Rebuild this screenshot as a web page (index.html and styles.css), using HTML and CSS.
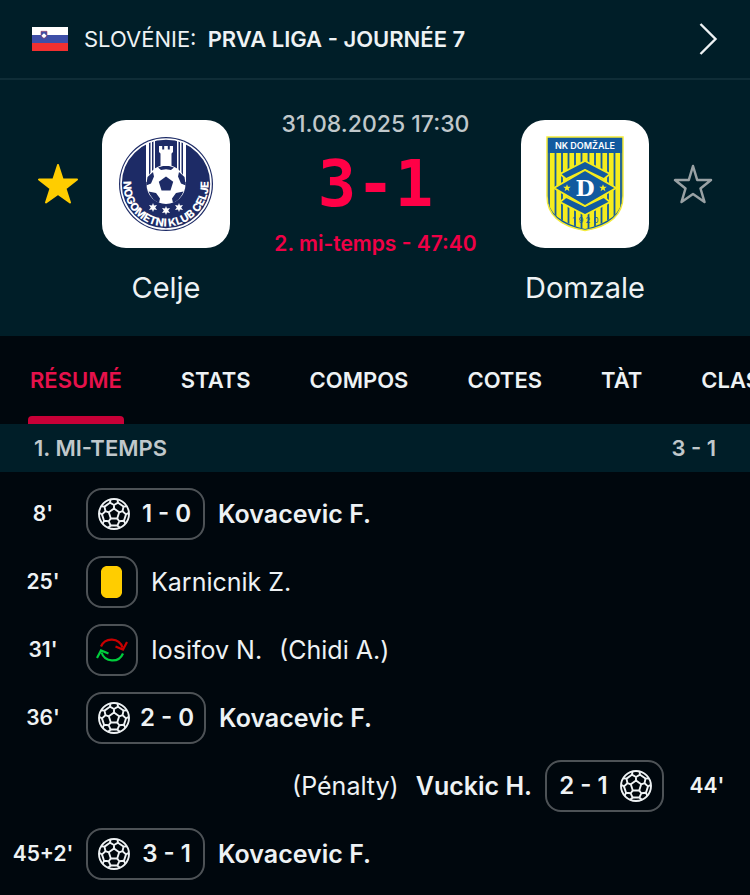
FILE: index.html
```html
<!DOCTYPE html>
<html lang="fr">
<head>
    <meta charset="UTF-8">
    <meta name="viewport" content="width=device-width, initial-scale=1">
    <title>Celje - Domzale</title>
    <link rel="stylesheet" href="styles.css">
</head>
<body>
    <!-- shared icons -->
    <svg class="sprite" aria-hidden="true">
        <symbol id="ball" viewBox="0 0 32 32">
            <g fill="none" stroke="currentColor" stroke-width="1.900" stroke-linejoin="round">
                <circle cx="16" cy="16" r="15"/>
                <path d="M16 10.500l5.200 3.800-2 6.200h-6.400l-2-6.200z"/>
                <path id="seam" d="M16 10.500V7M12.600 1.400l-.7 3.300L16 7l4.100-2.300-.7-3.300M20.100 4.700l5.400 3.900"/>
                <use href="#seam" transform="rotate(72 16 16)"/>
                <use href="#seam" transform="rotate(144 16 16)"/>
                <use href="#seam" transform="rotate(216 16 16)"/>
                <use href="#seam" transform="rotate(288 16 16)"/>
            </g>
        </symbol>
    </svg>

    <header class="league">
        <svg class="flag" viewBox="0 0 36 24" aria-hidden="true">
            <path fill="#fff" d="M0 0h36v8H0z"/>
            <path fill="#3d4fa8" d="M0 8h36v8H0z"/>
            <path fill="#f03030" d="M0 16h36v8H0z"/>
            <path fill="#3d4fa8" stroke="#b0405c" stroke-width=".6" d="M9 4.300h6V8q0 2.500-3 3.500Q9 10.500 9 8z"/>
            <path fill="#fff" d="M9.500 8.500l1.200-1 1.300-1.300 1.300 1.300 1.200 1q-.8 1.800-2.500 2.400-1.700-.6-2.500-2.400z"/>
        </svg>
        <a class="league-name" href="#">SLOVÉNIE: <b>PRVA LIGA - JOURNÉE 7</b></a>
        <svg class="chevron" viewBox="0 0 20 32" aria-hidden="true">
            <path fill="none" stroke="#eef2f4" stroke-width="2.400" d="M2.500 1l15 15-15 15"/>
        </svg>
    </header>

    <section class="match">
        <button class="star star-on" aria-label="Suivre Celje">
            <svg viewBox="0 0 40 40"><path d="M20 1l4.700 14.500H39L27.500 24.500 32 38.500 20 30 8 38.500l4.500-14L1 15.500h14.300z"/></svg>
        </button>
        <div class="crest">
            <svg viewBox="0 0 128 128" aria-hidden="true">
                <circle cx="64" cy="64" r="47" fill="#1d2b66"/>
                <circle cx="64" cy="64" r="45" fill="none" stroke="#fff" stroke-width="1.600"/>
                <path fill="#fff" d="M44 23.500l3-1.200V62h-3zM48.500 21.500l1.500-.5V60h-1.500zM51.500 21l1.500-.5V56h-1.500zM84 23.500l-3-1.200V62h3zM79.500 21.500L78 21v39h1.500zM76.500 21l-1.500-.5V56h1.500z"/>
                <path fill="#fff" d="M57 26h3.200v3.500h2V26h3.600v3.500h2V26H71v6l-1.500 1.500V48h-11V33.500L57 32z"/>
                <circle cx="64" cy="64.500" r="19.500" fill="#fff"/>
                <g fill="#1d2b66">
                    <path d="M64 56.500l7.200 5.200L68.500 70.500h-9l-2.700-8.800z"/>
                    <path d="M56 47.500l5-1.500h6l5 1.500-3 2.500-5-.8-5 .8zM45.500 57l5.500-5 1 4.500-3 7-4.800 2zM82.500 57L77 52l-1 4.500 3 7 4.800 2zM46.500 71.500l7.500 1.500 4 5.500-1 4.500q-7-3-10.500-11.500zM81.500 71.500L74 73l-4 5.500 1 4.500q7-3 10.500-11.500z"/>
                </g>
                <g fill="#fff">
                    <path id="mini-star" d="M64 86l1 2.500 3-.4-1.800 2.400 1.800 2.400-3-.4L64 95l-1-2.500-3 .4 1.800-2.400-1.800-2.400 3 .4z"/>
                    <use href="#mini-star" x="-13" y="-3"/>
                    <use href="#mini-star" x="13" y="-3"/>
                </g>
                <path id="ring" fill="none" d="M24.500 48A42.600 42.600 0 1 0 103.500 48"/>
                <text class="ring-text"><textPath href="#ring" startOffset="50%" text-anchor="middle">NOGOMETNI KLUB CELJE</textPath></text>
            </svg>
        </div>
        <div class="result">
            <time datetime="2025-08-31T17:30">31.08.2025 17:30</time>
            <strong class="score">3-1</strong>
            <span class="status">2. mi-temps - 47:40</span>
        </div>
        <div class="crest">
            <svg viewBox="0 0 128 128" aria-hidden="true">
                <defs>
                    <clipPath id="shield"><path d="M27 18h74v60q0 22-37 31Q27 100 27 78z"/></clipPath>
                </defs>
                <path fill="#125a9f" stroke="#f5ec3a" stroke-width="1.500" d="M26 17h76v59q0 28-38 34.500Q26 104 26 76z"/>
                <g clip-path="url(#shield)">
                    <path fill="#f5ec1e" d="M26 33h76v80H26z"/>
                    <path stroke="#125a9f" stroke-width="1.800" d="M28 33v80M34.500 33v80M41 33v80M47.500 33v80M54 33v80M60.500 33v80M67.500 33v80M74 33v80M80.500 33v80M87 33v80M93.500 33v80M100 33v80"/>
                </g>
                <path fill="#125a9f" stroke="#f5ec1e" stroke-width="1.800" d="M64 41l25 13-6 5-19-9-19 9-6-5zM64 95l25-13-6-5-19 9-19-9-6 5z"/>
                <path fill="#125a9f" stroke="#f5ec1e" stroke-width="1.800" d="M64 50l31 18-31 18-31-18z"/>
                <path fill="#f5ec1e" d="M46 64.200l1 2.600h2.800l-2.200 1.700.8 2.700-2.400-1.600-2.400 1.600.8-2.700-2.200-1.700H45zM82 64.200l1 2.600h2.800l-2.200 1.700.8 2.700-2.400-1.600-2.400 1.600.8-2.700-2.200-1.700H81z"/>
                <text class="shield-title" x="64" y="29">NK DOMŽALE</text>
                <text class="shield-letter" x="64" y="76">D</text>
                <text class="shield-year" x="53 60 67 75" y="103">1920</text>
            </svg>
        </div>
        <button class="star" aria-label="Suivre Domzale">
            <svg viewBox="0 0 40 40"><path d="M20 2l4.200 14H38L27.500 24.500 31.500 38 20 30 8.500 38l4-13.500L2 16h13.800z"/></svg>
        </button>
        <h2 class="team team-home">Celje</h2>
        <h2 class="team team-away">Domzale</h2>
    </section>

    <nav class="tabs">
        <a class="active" href="#">RÉSUMÉ</a>
        <a href="#">STATS</a>
        <a href="#">COMPOS</a>
        <a href="#">COTES</a>
        <a href="#">TÀT</a>
        <a href="#">CLASSEMENT</a>
    </nav>

    <div class="period">
        <span>1. MI-TEMPS</span>
        <span>3 - 1</span>
    </div>

    <ul class="events">
        <li>
            <span class="minute">8'</span>
            <span class="badge"><svg class="icon"><use href="#ball"/></svg><span class="goal">1 - 0</span></span>
            <b>Kovacevic F.</b>
        </li>
        <li>
            <span class="minute">25'</span>
            <span class="badge"><svg class="icon-small" viewBox="0 0 24 32"><path fill="#ffcd00" d="M6 0h11q4 1 5 5v22q-1 4-5 5H6q-4-1-5-5V5q1-4 5-5z"/></svg></span>
            <span>Karnicnik Z.</span>
        </li>
        <li>
            <span class="minute">31'</span>
            <span class="badge badge-swap">
                <svg class="icon" viewBox="0 0 32 32" fill="none" stroke-width="2.200">
                    <path stroke="#c80000" d="M5 12.500A11.500 11.500 0 0 1 26.500 13.500M19.500 12.500l7.500 3 4-7.500"/>
                    <path stroke="#00cd3c" d="M27 19.500A11.500 11.500 0 0 1 5.500 18.500M12.500 19.500l-7.500-3-4 7.500"/>
                </svg>
            </span>
            <span>Iosifov N.</span>
            <span class="note">(Chidi A.)</span>
        </li>
        <li>
            <span class="minute">36'</span>
            <span class="badge"><svg class="icon"><use href="#ball"/></svg><span class="goal">2 - 0</span></span>
            <b>Kovacevic F.</b>
        </li>
        <li class="away">
            <span class="minute">44'</span>
            <span class="badge"><svg class="icon"><use href="#ball"/></svg><span class="goal">2 - 1</span></span>
            <b>Vuckic H.</b>
            <span class="note">(Pénalty)</span>
        </li>
        <li>
            <span class="minute">45+2'</span>
            <span class="badge"><svg class="icon"><use href="#ball"/></svg><span class="goal">3 - 1</span></span>
            <b>Kovacevic F.</b>
        </li>
    </ul>
</body>
</html>
```
FILE: styles.css
```css
* {
    box-sizing: border-box;
}

body {
    margin: 0;
    background: #00070d;
    color: #eef2f4;
    font-family: Inter, "Liberation Sans", sans-serif;
    font-size: 22px;
    line-height: 24px;
    overflow-x: hidden;
}

b {
    font-weight: 600;
}

a {
    color: inherit;
    text-decoration: none;
}

.sprite {
    display: none;
}

/* league bar */
.league {
    display: flex;
    align-items: center;
    gap: 16px;
    height: 80px;
    padding: 0 32px;
    background: #001e28;
    border-bottom: 2px solid #0f2d37;
}

.flag {
    width: 36px;
    height: 24px;
}

.league-name {
    flex: 1;
}

.league-name b {
    margin-left: 5px;
}

.chevron {
    width: 20px;
    height: 32px;
}

/* match header */
.match {
    display: grid;
    grid-template-columns: 40px 128px 1fr 128px 40px;
    gap: 16px 24px;
    align-items: center;
    padding: 32px 37px 32px 38px;
    background: #001e28;
}

.star {
    padding: 0;
    border: 0;
    background: none;
    cursor: pointer;
}

.star svg {
    display: block;
    width: 40px;
    height: 40px;
    fill: none;
    stroke: #99a1a4;
    stroke-width: 2.5;
    stroke-linejoin: round;
}

.star-on svg {
    fill: #ffcd00;
    stroke: #ffcd00;
    stroke-width: 2;
}

.crest {
    height: 128px;
    background: #fff;
    border-radius: 24px;
}

.crest svg {
    display: block;
}

.ring-text {
    fill: #fff;
    font-size: 11px;
    font-weight: 800;
}

.shield-title,
.shield-letter,
.shield-year {
    fill: #fff;
    text-anchor: middle;
}

.shield-title {
    font-size: 9px;
    font-weight: 600;
}

.shield-letter {
    font-family: "DejaVu Serif", serif;
    font-size: 22px;
    font-weight: 700;
}

.shield-year {
    fill: #125a9f;
    font-size: 8px;
}

.result {
    display: flex;
    flex-direction: column;
    align-items: center;
    gap: 16px;
    white-space: nowrap;
}

.result time {
    color: #c0c8cb;
    font-size: 23px;
    font-weight: 500;
}

.score {
    color: #ff0046;
    font-family: "DejaVu Sans Mono", monospace;
    font-size: 64px;
    line-height: 64px;
}

.status {
    color: #f00046;
    font-size: 21px;
    font-weight: 600;
}

.team {
    margin: 0;
    font-size: 29px;
    font-weight: 400;
    line-height: 32px;
    text-align: center;
}

.team-home {
    grid-column: 2;
}

.team-away {
    grid-column: 4;
}

/* tabs */
.tabs {
    display: flex;
    gap: 55px;
    height: 88px;
    padding: 0 28px;
    overflow: hidden;
    font-weight: 600;
}

.tabs a {
    display: flex;
    flex-direction: column;
    padding: 32px 2px 0;
}

.tabs .active {
    color: #e6114b;
}

.tabs .active::after {
    content: "";
    height: 8px;
    margin: auto -2px 0;
    background: #c80037;
    border-radius: 4px 4px 0 0;
}

/* events */
.period {
    display: flex;
    justify-content: space-between;
    padding: 12px 34px;
    background: #001e28;
    color: #c0c8cb;
    font-weight: 600;
}

.events {
    margin: 0;
    padding: 8px 0;
    list-style: none;
    font-size: 25px;
}

.events li {
    display: flex;
    align-items: center;
    gap: 13px;
    height: 68px;
}

.events .away {
    flex-direction: row-reverse;
}

.minute {
    width: 86px;
    margin-right: -13px;
    font-size: 21px;
    font-weight: 600;
    text-align: center;
}

.away .minute {
    margin: 0 0 0 -13px;
}

.badge {
    display: flex;
    align-items: center;
    gap: 10px;
    height: 52px;
    padding: 0 10px;
    border: 2px solid #4d5256;
    border-radius: 16px;
    font-weight: 600;
}

.away .badge {
    flex-direction: row-reverse;
}

.goal {
    min-width: 53px;
    font-size: 24px;
    text-align: center;
}

.icon {
    width: 32px;
    height: 32px;
}

.icon-small {
    width: 24px;
    height: 32px;
    margin: 0 2px;
}

.badge-swap {
    padding: 0 8px;
}

.note {
    margin: 0 4px;
}
```
